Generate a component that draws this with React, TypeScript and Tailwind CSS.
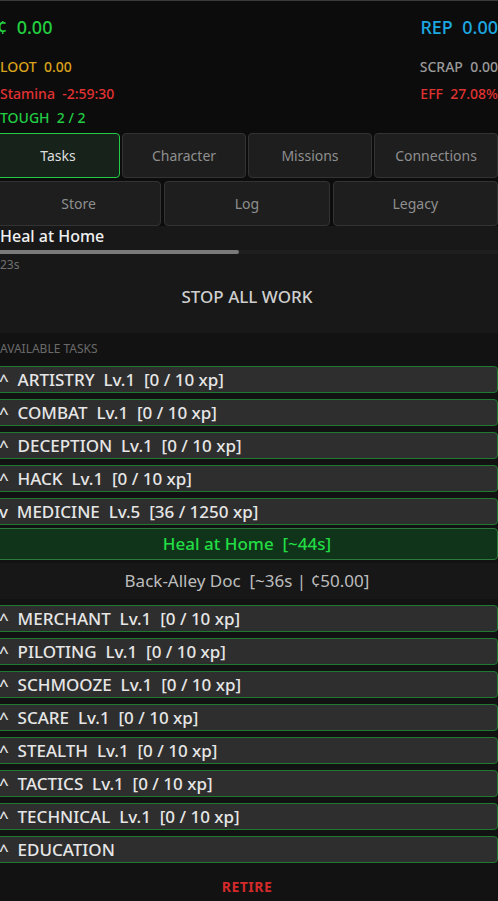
import React from 'react';

const skills = [
  { name: 'ARTISTRY', lv: 1, xp: '0 / 10' },
  { name: 'COMBAT', lv: 1, xp: '0 / 10' },
  { name: 'DECEPTION', lv: 1, xp: '0 / 10' },
  { name: 'HACK', lv: 1, xp: '0 / 10' },
  { name: 'MEDICINE', lv: 5, xp: '36 / 1250', open: true },
  { name: 'MERCHANT', lv: 1, xp: '0 / 10' },
  { name: 'PILOTING', lv: 1, xp: '0 / 10' },
  { name: 'SCHMOOZE', lv: 1, xp: '0 / 10' },
  { name: 'SCARE', lv: 1, xp: '0 / 10' },
  { name: 'STEALTH', lv: 1, xp: '0 / 10' },
  { name: 'TACTICS', lv: 1, xp: '0 / 10' },
  { name: 'TECHNICAL', lv: 1, xp: '0 / 10' },
];

const tabsTop = ['Tasks', 'Character', 'Missions', 'Connections'];
const tabsBottom = ['Store', 'Log', 'Legacy'];

const SkillRow: React.FC<{ label: string; open?: boolean }> = ({ label, open }) => (
  <div className="h-[27px] flex items-center px-[2px] bg-[#2e2e2e] border border-[#1e7a30] rounded-[4px] text-[17px] leading-none font-medium text-[#e6e6e6] whitespace-pre">
    {(open ? 'v' : '^') + '  ' + label}
  </div>
);

export default function App() {
  return (
    <div className="min-h-screen bg-[#121212] overflow-hidden" style={{ fontFamily: '"Noto Sans", "Open Sans", sans-serif' }}>
      <div className="-ml-[4px] w-[calc(100%+4px)]">
        {/* header */}
        <div className="bg-[#0c0c0c] border-t border-[#3a3a3a]">
          <div className="flex justify-between pl-[1px] pt-[13px] text-[18px] leading-[26px] font-medium">
            <span className="text-[#22d040] whitespace-pre">¢  0.00</span>
            <span className="text-[#1ca8e0] whitespace-pre">REP  0.00</span>
          </div>
          <div className="flex justify-between pl-[4px] mt-[17px] text-[14px] leading-[20px] font-medium">
            <span className="text-[#d9a21b] whitespace-pre">LOOT  0.00</span>
            <span className="text-[#9a9a9a] whitespace-pre">SCRAP  0.00</span>
          </div>
          <div className="flex justify-between pl-[4px] mt-[7px] text-[14px] leading-[20px] font-medium">
            <span className="text-[#e03232] whitespace-pre">Stamina  -2:59:30</span>
            <span className="text-[#e03232] whitespace-pre">EFF  27.08%</span>
          </div>
          <div className="flex pl-[4px] mt-[4px] text-[14px] leading-[20px] font-medium">
            <span className="text-[#22cc44] whitespace-pre">TOUGH  2 / 2</span>
          </div>

          {/* tabs */}
          <div className="grid grid-cols-4 gap-[2px] mt-[5px]">
            {tabsTop.map((t, i) => (
              <div
                key={t}
                className={`h-[45px] flex items-center justify-center rounded-[4px] border text-[14px] ${
                  i === 0
                    ? 'bg-[#17231a] border-[#22cc44] text-[#dedede]'
                    : 'bg-[#1e1e1e] border-[#333] text-[#8f8f8f]'
                }`}
              >
                {t}
              </div>
            ))}
          </div>
          <div className="grid grid-cols-3 gap-[3px] mt-[3px]">
            {tabsBottom.map(t => (
              <div
                key={t}
                className="h-[45px] flex items-center justify-center rounded-[4px] border bg-[#1e1e1e] border-[#333] text-[14px] text-[#8f8f8f]"
              >
                {t}
              </div>
            ))}
          </div>
        </div>

        {/* current work */}
        <div className="bg-[#181818] pl-[4px] pb-[24px]">
          <div className="text-[16px] leading-[20px] text-[#f0f0f0] font-medium">Heal at Home</div>
          <div className="mt-[4px] -ml-[4px] h-[4px] bg-[#1f1f1f] rounded-full">
            <div className="h-[4px] w-[243px] bg-[#7a7a7a] rounded-full" />
          </div>
          <div className="mt-[3px] text-[12px] leading-[16px] text-[#707070]">23s</div>
          <div className="mt-[12px] text-center text-[17px] leading-[24px] font-medium text-[#cfcfcf] -ml-[4px]">STOP ALL WORK</div>
        </div>

        {/* tasks */}
        <div className="pt-[8px] pb-[14px]">
          <div className="pl-[4px] text-[12px] leading-[16px] text-[#6a6a6a]">AVAILABLE TASKS</div>
          <div className="mt-[9px] flex flex-col gap-[6px]">
            {skills.map(s => (
              <React.Fragment key={s.name}>
                <SkillRow label={`${s.name}  Lv.${s.lv}  [${s.xp} xp]`} open={s.open} />
                {s.open && (
                  <div className="-mt-[3px] flex flex-col gap-[3px]">
                    <div className="h-[32px] flex items-center justify-center bg-[#10341a] border border-[#2b7a3b] rounded-[4px] text-[17px] font-medium text-[#22dd44] whitespace-pre">
                      {'Heal at Home  [~44s]'}
                    </div>
                    <div className="h-[36px] flex items-center justify-center bg-[#171717] text-[17px] text-[#bdbdbd] whitespace-pre">
                      {'Back-Alley Doc  [~36s | ¢50.00]'}
                    </div>
                  </div>
                )}
              </React.Fragment>
            ))}
            <SkillRow label="EDUCATION" />
          </div>
          <div className="mt-[15px] text-center text-[14px] leading-[18px] font-bold tracking-[0.5px] text-[#d42a2a]">RETIRE</div>
        </div>
      </div>
    </div>
  );
}
